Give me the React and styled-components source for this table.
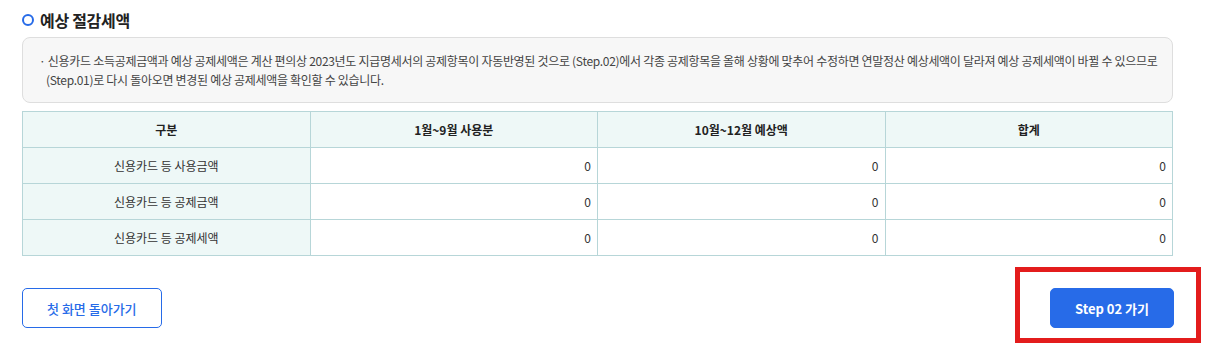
import React from "react";
import styled, { createGlobalStyle } from "styled-components";

const colors = {
  blue: "#276be8",
  text: "#333333",
  notice: "#444444",
  line: "#b7d6d8",
  mint: "#eef8f7",
  boxBg: "#f7f7f7",
  boxLine: "#dedede",
  red: "#e31c1c",
};

const GlobalStyle = createGlobalStyle`
  * {
    box-sizing: border-box;
    margin: 0;
    padding: 0;
  }
  body {
    background: #ffffff;
    font-family: "Noto Sans CJK KR", "Noto Sans", sans-serif;
    color: ${colors.text};
  }
`;

const Page = styled.div`
  width: 1206px;
  min-height: 346px;
  padding: 9px 33px 20px 22px;
`;

const Title = styled.h3`
  display: flex;
  align-items: center;
  gap: 6px;
  height: 22px;
  font-size: 16px;
  font-weight: 700;
  color: #222;
  letter-spacing: -0.3px;

  &::before {
    content: "";
    width: 8px;
    height: 8px;
    border: 2px solid ${colors.blue};
    border-radius: 50%;
  }
`;

const NoticeBox = styled.div`
  margin-top: 6px;
  padding: 13px 8px 13px 23px;
  background: ${colors.boxBg};
  border: 1px solid ${colors.boxLine};
  border-radius: 8px;
  font-size: 12px;
  line-height: 19px;
  color: ${colors.notice};
  letter-spacing: -0.3px;
  word-break: keep-all;
  text-indent: -7px;
`;

const Table = styled.table`
  width: 100%;
  margin-top: 8px;
  border-collapse: collapse;
  table-layout: fixed;
  font-size: 12px;
  color: ${colors.text};

  th,
  td {
    height: 36px;
    border: 1px solid ${colors.line};
  }
`;

const HeadCell = styled.th`
  background: ${colors.mint};
  font-weight: 700;
  text-align: center;
  color: #222;
`;

const LabelCell = styled.td`
  background: ${colors.mint};
  text-align: center;
`;

const ValueCell = styled.td`
  text-align: right;
  padding-right: 6px;
`;

const Actions = styled.div`
  display: flex;
  justify-content: space-between;
  align-items: center;
  margin-top: 32px;
`;

const Button = styled.button`
  height: 40px;
  padding: 0 24px;
  border-radius: 5px;
  border: 1px solid ${colors.blue};
  background: ${(p) => (p.$primary ? colors.blue : "#fff")};
  color: ${(p) => (p.$primary ? "#fff" : colors.blue)};
  font-family: "Noto Sans CJK KR", "Noto Sans", sans-serif;
  font-size: 13px;
  font-weight: ${(p) => (p.$primary ? 700 : 500)};
  cursor: pointer;
`;

const Highlight = styled.div`
  position: relative;
  margin-right: -1px;

  &::after {
    content: "";
    position: absolute;
    top: -21px;
    left: -35px;
    right: -27px;
    bottom: -15px;
    border: 5px solid ${colors.red};
    pointer-events: none;
  }
`;

const rows = ["신용카드 등 사용금액", "신용카드 등 공제금액", "신용카드 등 공제세액"];
const heads = ["구분", "1월~9월 사용분", "10월~12월 예상액", "합계"];

export default function App() {
  return (
    <Page>
      <GlobalStyle />
      <Title>예상 절감세액</Title>
      <NoticeBox>
        · 신용카드 소득공제금액과 예상 공제세액은 계산 편의상 2023년도 지급명세서의 공제항목이 자동반영된 것으로 (Step.02)에서 각종 공제항목을 올해 상황에 맞추어 수정하면 연말정산 예상세액이 달라져 예상 공제세액이 바뀔 수 있으므로 (Step.01)로 다시 돌아오면 변경된 예상 공제세액을 확인할 수 있습니다.
      </NoticeBox>
      <Table>
        <thead>
          <tr>
            {heads.map((h) => (
              <HeadCell key={h}>{h}</HeadCell>
            ))}
          </tr>
        </thead>
        <tbody>
          {rows.map((r) => (
            <tr key={r}>
              <LabelCell>{r}</LabelCell>
              <ValueCell>0</ValueCell>
              <ValueCell>0</ValueCell>
              <ValueCell>0</ValueCell>
            </tr>
          ))}
        </tbody>
      </Table>
      <Actions>
        <Button>첫 화면 돌아가기</Button>
        <Highlight>
          <Button $primary>Step 02 가기</Button>
        </Highlight>
      </Actions>
    </Page>
  );
}
